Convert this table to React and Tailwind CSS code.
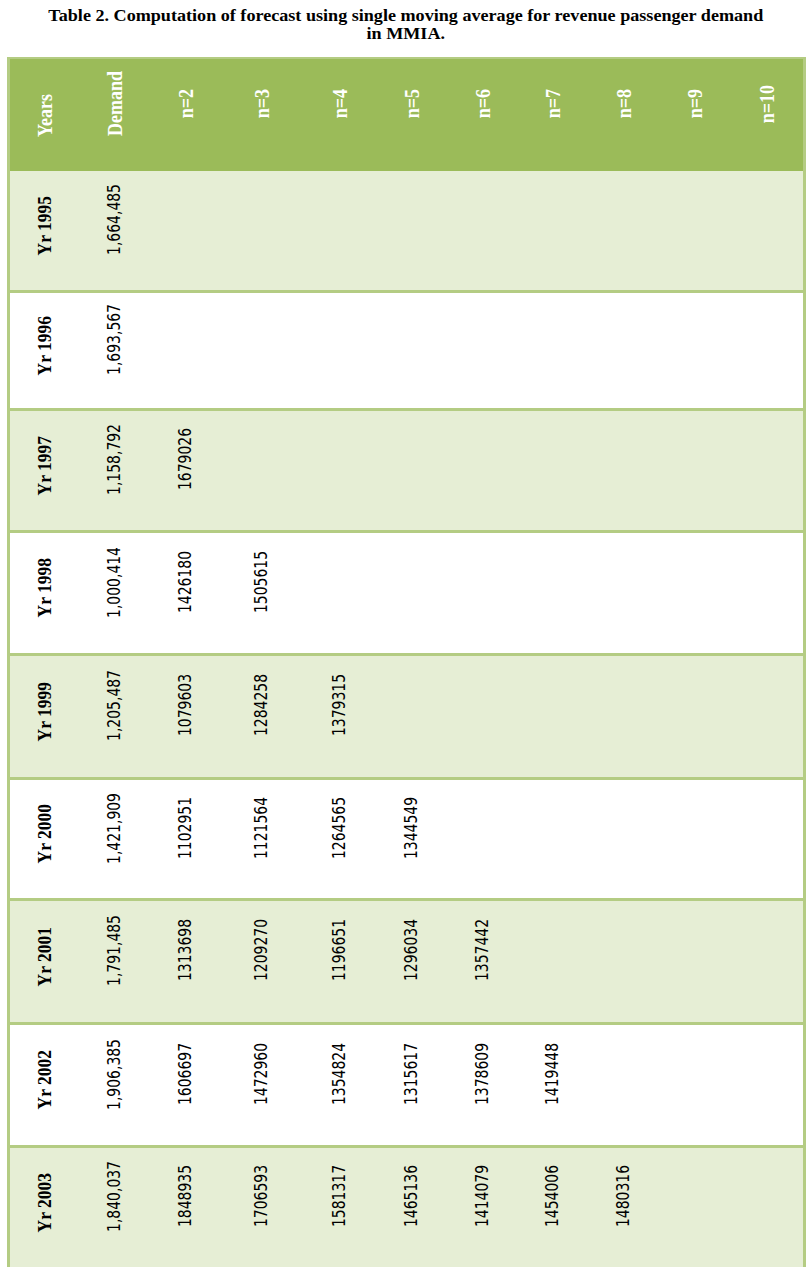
const columns = ["Years", "Demand", "n=2", "n=3", "n=4", "n=5", "n=6", "n=7", "n=8", "n=9", "n=10"];

const rows = [
  { h: "h-[119px]", shade: true, first: true, cells: ["Yr 1995", "1,664,485"] },
  { h: "h-[118px]", shade: false, cells: ["Yr 1996", "1,693,567"] },
  { h: "h-[122px]", shade: true, cells: ["Yr 1997", "1,158,792", "1679026"] },
  { h: "h-[123px]", shade: false, cells: ["Yr 1998", "1,000,414", "1426180", "1505615"] },
  { h: "h-[124px]", shade: true, cells: ["Yr 1999", "1,205,487", "1079603", "1284258", "1379315"] },
  { h: "h-[121px]", shade: false, cells: ["Yr 2000", "1,421,909", "1102951", "1121564", "1264565", "1344549"] },
  { h: "h-[124px]", shade: true, cells: ["Yr 2001", "1,791,485", "1313698", "1209270", "1196651", "1296034", "1357442"] },
  { h: "h-[123px]", shade: false, cells: ["Yr 2002", "1,906,385", "1606697", "1472960", "1354824", "1315617", "1378609", "1419448"] },
  { h: "h-[122px]", shade: true, cells: ["Yr 2003", "1,840,037", "1848935", "1706593", "1581317", "1465136", "1414079", "1454006", "1480316"] },
];

const gridCols = "grid grid-cols-[70px_70px_71px_82px_73px_71px_71px_70px_71px_71px_73px]";

// text reads bottom to top, glyphs a bit wider like the scanned table
function Vertical({ children, className = "" }) {
  return (
    <span className={`whitespace-nowrap [writing-mode:vertical-rl] rotate-180 scale-x-[1.13] ${className}`}>
      {children}
    </span>
  );
}

export default function App() {
  return (
    <div className="w-[812px] overflow-hidden bg-white">
      <h1 className="pt-[7px] text-center font-['Liberation_Serif',serif] text-[16px] font-bold leading-[17.5px] text-black">
        <span className="inline-block scale-x-[1.132]">
          Table 2. Computation of forecast using single moving average for revenue passenger demand
          <br />
          in MMIA.
        </span>
      </h1>

      <div className="mt-[15px] ml-[7px] w-[799px] border-x-[3px] border-t-2 border-[#b4cc83]">
        <div className={`${gridCols} h-[112px] bg-[#9bbb59]`}>
          {columns.map((col, i) => (
            <div
              key={col}
              className={`flex items-center justify-center ${i === 0 ? "pb-0" : "pb-[22px]"}`}
            >
              <Vertical className="font-['Liberation_Serif',serif] text-[18px] font-bold leading-none text-white">
                {col}
              </Vertical>
            </div>
          ))}
        </div>

        {rows.map((row) => (
          <div
            key={row.cells[0]}
            className={[
              gridCols,
              row.h,
              row.shade ? "bg-[#e6eed5]" : "bg-white",
              row.first ? "" : "border-t-[3px] border-[#b4cc83]",
            ].join(" ")}
          >
            {columns.map((col, i) => {
              const value = row.cells[i];
              return (
                <div
                  key={col}
                  className={`flex items-center justify-center ${i === 0 ? "pb-[10px]" : "pb-[22px]"}`}
                >
                  {value ? (
                    i === 0 ? (
                      <Vertical className="font-['Liberation_Serif',serif] text-[17.5px] font-bold leading-none text-black">
                        {value}
                      </Vertical>
                    ) : (
                      <Vertical className="font-['DejaVu_Sans_Condensed','DejaVu_Sans',sans-serif] text-[15.5px] leading-none text-black [font-stretch:condensed]">
                        {value}
                      </Vertical>
                    )
                  ) : null}
                </div>
              );
            })}
          </div>
        ))}
      </div>
    </div>
  );
}
